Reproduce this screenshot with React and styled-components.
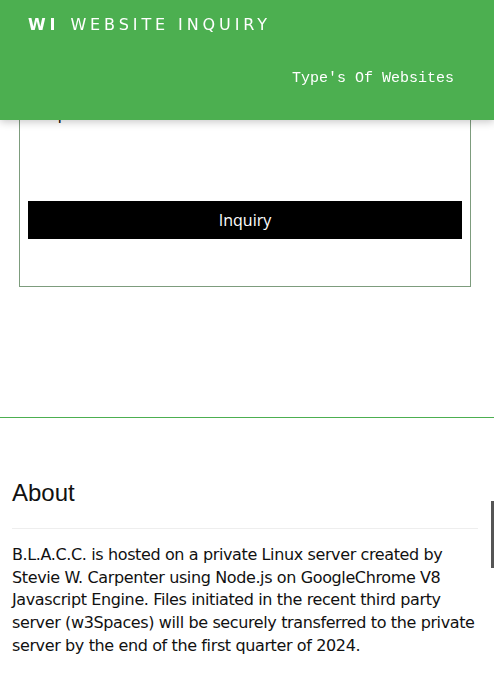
import React from "react";
import styled, { createGlobalStyle } from "styled-components";

// # GLOBAL
const GlobalStyle = createGlobalStyle`
	html, body {
		margin: 0;
		padding: 0;
		background: #fff;
		font-family: "DejaVu Sans", Verdana, sans-serif;
		color: #111;
	}
`;

// # MAIN COMP..
const App = () => {
	return (
		<>
			<GlobalStyle />
			<Header>
				<Brand>
					<strong>WI</strong> WEBSITE INQUIRY
				</Brand>
				<NavLink href="#types">Type's Of Websites</NavLink>
			</Header>

			<Main>
				<Card>
					<Label>Inquiries</Label>
					<Spacer />
					<SubmitBtn type="button">Inquiry</SubmitBtn>
				</Card>
			</Main>

			<Divider />

			<About>
				<AboutTitle>About</AboutTitle>
				<AboutText>
					B.L.A.C.C. is hosted on a private Linux server created by Stevie W.
					Carpenter using Node.js on GoogleChrome V8 Javascript Engine. Files
					initiated in the recent third party server (w3Spaces) will be securely
					transferred to the private server by the end of the first quarter of
					2024.
				</AboutText>
			</About>

			<SideTab />
		</>
	);
};

// # STYLED COMPONENTS
const Header = styled.header`
	position: fixed;
	top: 0;
	left: 0;
	right: 0;
	height: 120px;
	z-index: 10;
	background: #4caf50;
	box-shadow: 0 2px 8px rgba(0, 0, 0, 0.22);
	display: flex;
	flex-direction: column;
	padding: 14px 40px 0 28px;
	box-sizing: border-box;
`;

const Brand = styled.div`
	color: #fff;
	font-family: "DejaVu Sans", Verdana, sans-serif;
	font-size: 16px;
	letter-spacing: 3.9px;
	line-height: 20px;
	margin-top: 1px;

	strong {
		font-weight: 700;
		margin-right: 2px;
	}
`;

const NavLink = styled.a`
	align-self: flex-end;
	margin-top: 34px;
	color: #fff;
	text-decoration: none;
	font-family: "Liberation Mono", monospace;
	font-size: 15px;
	line-height: 20px;
`;

const Main = styled.main`
	padding-top: 60px;
	height: 417px;
	box-sizing: border-box;
`;

const Card = styled.section`
	margin-left: 19px;
	width: 452px;
	box-sizing: border-box;
	border: 1px solid #7d9c7d;
	padding: 0 8px 47px;
	display: flex;
	flex-direction: column;
`;

const Label = styled.label`
	font-size: 16px;
	line-height: 20px;
	margin-top: 44px;
	padding-left: 9px;
`;

const Spacer = styled.div`
	height: 76px;
`;

const SubmitBtn = styled.button`
	height: 38px;
	border: none;
	background: #000;
	color: #fff;
	font-family: "Open Sans", "Noto Sans", sans-serif;
	font-size: 16px;
	cursor: pointer;
`;

const Divider = styled.hr`
	margin: 0;
	border: none;
	border-top: 1px solid #4caf50;
`;

const About = styled.section`
	padding: 60px 16px 0 12px;
`;

const AboutTitle = styled.h2`
	margin: 0;
	font-family: "Liberation Sans", Arial, sans-serif;
	font-weight: 400;
	font-size: 24px;
	line-height: 30px;
	padding-bottom: 20px;
	border-bottom: 1px solid #eee;
`;

const AboutText = styled.p`
	margin: 15px 0 0;
	font-family: "DejaVu Sans", Verdana, sans-serif;
	font-size: 16px;
	letter-spacing: -0.38px;
	line-height: 22.7px;
	color: #111;
`;

const SideTab = styled.div`
	position: fixed;
	right: 0;
	top: 501px;
	width: 3px;
	height: 67px;
	background: #555;
`;

export default App;
